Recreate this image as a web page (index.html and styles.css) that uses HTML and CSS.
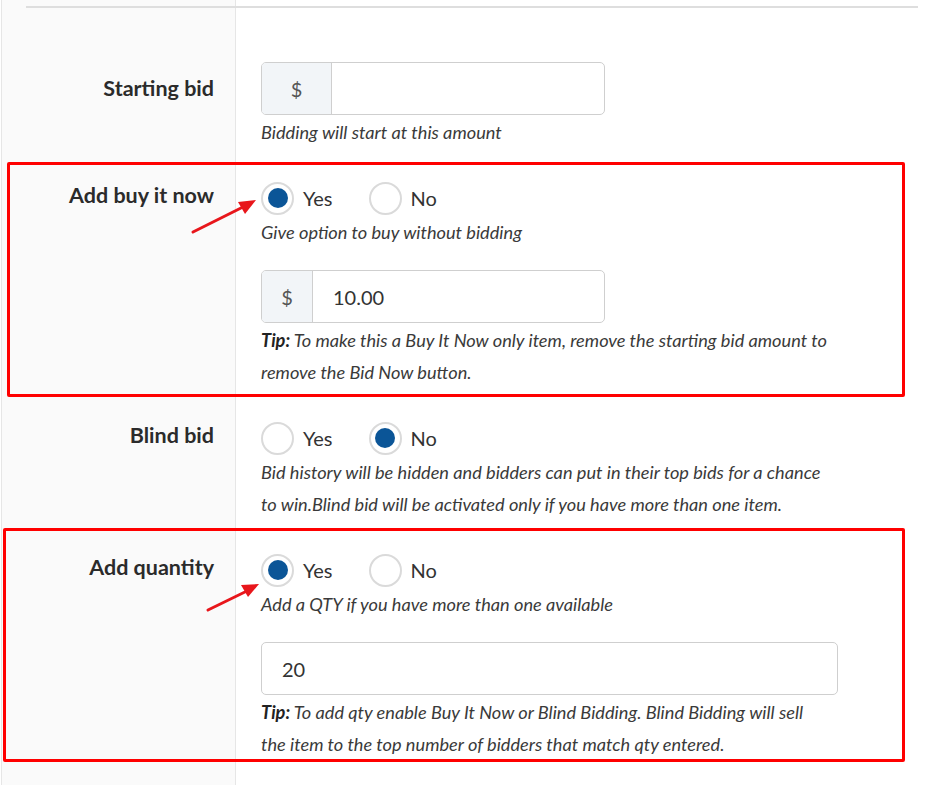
FILE: index.html
```
<!DOCTYPE html>
<html lang="en">
<head>
    <meta charset="UTF-8">
    <meta name="viewport" content="width=device-width, initial-scale=1.0">
    <title>Auction item options</title>
    <link rel="stylesheet" href="styles.css">
</head>
<body>
<div class="form">
    <div class="rule"></div>

    <!-- Starting bid -->
    <div class="row first">
        <div class="label pad-input">Starting bid</div>
        <div class="field">
            <div class="input-group">
                <span class="addon wide">$</span>
                <input class="text-input" type="text" value="">
            </div>
            <p class="help">Bidding will start at this amount</p>
        </div>
    </div>

    <!-- Buy it now -->
    <div class="row">
        <div class="label">Add buy it now</div>
        <div class="field">
            <div class="radios">
                <span class="option"><span class="radio checked"></span>Yes</span>
                <span class="option"><span class="radio"></span>No</span>
            </div>
            <p class="help">Give option to buy without bidding</p>
            <div class="input-group spaced">
                <span class="addon">$</span>
                <input class="text-input" type="text" value="10.00">
            </div>
            <p class="help"><b>Tip:</b> To make this a Buy It Now only item, remove the starting bid amount to remove the Bid Now button.</p>
        </div>
    </div>

    <!-- Blind bid -->
    <div class="row">
        <div class="label">Blind bid</div>
        <div class="field">
            <div class="radios">
                <span class="option"><span class="radio"></span>Yes</span>
                <span class="option"><span class="radio checked"></span>No</span>
            </div>
            <p class="help">Bid history will be hidden and bidders can put in their top bids for a chance to win.Blind bid will be activated only if you have more than one item.</p>
        </div>
    </div>

    <!-- Quantity -->
    <div class="row">
        <div class="label">Add quantity</div>
        <div class="field">
            <div class="radios">
                <span class="option"><span class="radio checked"></span>Yes</span>
                <span class="option"><span class="radio"></span>No</span>
            </div>
            <p class="help">Add a QTY if you have more than one available</p>
            <div class="input-group spaced long">
                <input class="text-input" type="text" value="20">
            </div>
            <p class="help"><b>Tip:</b> To add qty enable Buy It Now or Blind Bidding. Blind Bidding will sell the item to the top number of bidders that match qty entered.</p>
        </div>
    </div>

    <!-- annotations drawn over the form -->
    <div class="mark mark-buy"></div>
    <div class="mark mark-qty"></div>
    <svg class="arrow arrow-buy" width="70" height="40" viewBox="0 0 70 40">
        <line x1="3" y1="35" x2="55" y2="9" stroke="#e8161b" stroke-width="3" stroke-linecap="round"/>
        <polygon points="66,3 48,5 55,17" fill="#e8161b"/>
    </svg>
    <svg class="arrow arrow-qty" width="60" height="34" viewBox="0 0 60 34">
        <line x1="3" y1="30" x2="44" y2="10" stroke="#e8161b" stroke-width="3" stroke-linecap="round"/>
        <polygon points="54,4 36,5 43,17" fill="#e8161b"/>
    </svg>
</div>
</body>
</html>
```

FILE: styles.css
```
body {
    margin: 0;
    background: #fff;
    font-family: Lato, "Open Sans", sans-serif;
    color: #2d2d2d;
}
.form {
    position: relative;
    min-height: 779px;
    padding-top: 6px;
    border-left: 1px solid #e6e6e6;
    margin-left: 1px;
    background: linear-gradient(to right, #fafafa 233px, #e6e6e6 233px, #e6e6e6 234px, #fff 234px);
}
.rule {
    height: 2px;
    background: #dedede;
    margin: 0 20px 0 24px;
}
.row {
    display: grid;
    grid-template-columns: 234px 1fr;
    margin-top: 33px;
}
.row.first {
    margin-top: 54px;
}
.label {
    text-align: right;
    padding-right: 22px;
    font-size: 21.5px;
    font-weight: bold;
    line-height: 28px;
    color: #2b2b2b;
}
.label.pad-input {
    padding-top: 12px;
}
.field {
    padding-left: 25px;
}
.input-group {
    display: flex;
    width: 342px;
    height: 51px;
    border: 1px solid #cfcfcf;
    border-radius: 5px;
    overflow: hidden;
    background: #fff;
}
.input-group.spaced {
    margin-top: 22px;
}
.input-group.long {
    width: 575px;
}
.addon {
    flex-shrink: 0;
    width: 50px;
    background: #f2f5f8;
    border-right: 1px solid #cfcfcf;
    display: flex;
    align-items: center;
    justify-content: center;
    font-size: 20px;
    color: #555;
}
.addon.wide {
    width: 69px;
}
.text-input {
    flex: 1;
    min-width: 0;
    border: none;
    outline: none;
    padding: 0 20px;
    font-family: inherit;
    font-size: 20px;
    color: #333;
    background: transparent;
}
.help {
    margin: 1px 0 0;
    max-width: 569px;
    font-size: 18.2px;
    line-height: 32px;
    font-style: italic;
    color: #3a3a3a;
}
.help b {
    color: #222;
}
.radios {
    display: flex;
    height: 34px;
    align-items: center;
}
.option {
    display: inline-flex;
    align-items: center;
    gap: 9px;
    font-size: 20px;
    color: #333;
    margin-right: 36px;
}
.radio {
    width: 29px;
    height: 29px;
    border: 2px solid #dadada;
    border-radius: 50%;
    background: #fff;
    display: flex;
    align-items: center;
    justify-content: center;
}
.radio.checked::after {
    content: "";
    width: 20px;
    height: 20px;
    border-radius: 50%;
    background: #0b5597;
}
.mark {
    position: absolute;
    border: 3px solid #f00;
    border-radius: 2px;
}
.mark-buy {
    left: 5px;
    top: 162px;
    width: 892px;
    height: 229px;
}
.mark-qty {
    left: 1px;
    top: 528px;
    width: 896px;
    height: 228px;
}
.arrow {
    position: absolute;
}
.arrow-buy {
    left: 188px;
    top: 197px;
}
.arrow-qty {
    left: 203px;
    top: 580px;
}
```
